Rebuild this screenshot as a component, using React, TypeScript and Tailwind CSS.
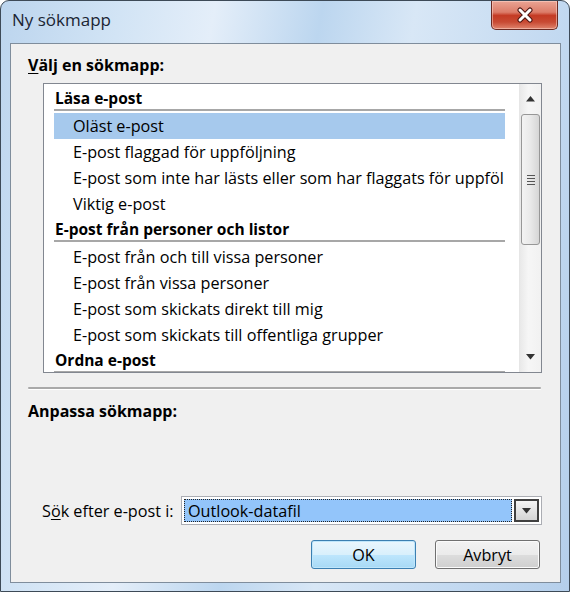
const groups = [
  {
    title: "Läsa e-post",
    items: [
      "Oläst e-post",
      "E-post flaggad för uppföljning",
      "E-post som inte har lästs eller som har flaggats för uppföl",
      "Viktig e-post",
    ],
  },
  {
    title: "E-post från personer och listor",
    items: [
      "E-post från och till vissa personer",
      "E-post från vissa personer",
      "E-post som skickats direkt till mig",
      "E-post som skickats till offentliga grupper",
    ],
  },
  {
    title: "Ordna e-post",
    items: [],
  },
];

const selected = "Oläst e-post";

const CloseGlyph = () => (
  <svg width="20" height="16" viewBox="0 0 20 16">
    <path d="M5 3 L15 13 M15 3 L5 13" stroke="#4a1410" strokeWidth="5" strokeLinecap="round" />
    <path d="M5 3 L15 13 M15 3 L5 13" stroke="#ffffff" strokeWidth="3" strokeLinecap="round" />
  </svg>
);

const Arrow = ({ down }: { down?: boolean }) => (
  <svg width="9" height="6" viewBox="0 0 9 6">
    {down ? <path d="M0 0 H9 L4.5 5.5 Z" fill="#333" /> : <path d="M0 5.5 H9 L4.5 0 Z" fill="#333" />}
  </svg>
);

export default function App() {
  return (
    <div className="w-[570px] h-[592px] flex flex-col overflow-hidden rounded-t-[9px] border border-[#3d4a57] bg-[linear-gradient(100deg,#bcd5ee_0%,#d2e4f5_18%,#e4eef9_32%,#bcd6ef_48%,#d8e7f6_62%,#c4daf1_82%,#b5cfeb_100%)] font-['Open_Sans','Noto_Sans',sans-serif] text-black">
      {/* title bar */}
      <div className="h-[42px] flex items-start justify-between pl-[11px]">
        <span className="mt-[8px] text-[17px] leading-[22px] text-[#1b2533]">Ny sökmapp</span>
        <button className="mr-[11px] w-[67px] h-[29px] flex items-center justify-center rounded-b-[5px] border border-t-0 border-[#6b2a22] bg-[linear-gradient(180deg,#eaa494_0%,#dc7c69_40%,#c43a24_52%,#c84a33_75%,#e0846d_100%)] shadow-[inset_0_0_0_1px_rgba(255,220,210,0.5)]">
          <CloseGlyph />
        </button>
      </div>

      {/* client area */}
      <div className="flex-1 ml-[9px] mr-[8px] mb-[8px] flex flex-col border border-[#7f8d9c] bg-[#f0f0f0]">
        <div className="ml-[17px] mt-[11px] text-[16px] leading-[20px] font-bold">
          <span className="underline underline-offset-2">V</span>älj en sökmapp:
        </div>

        <div className="ml-[32px] mt-[8px] w-[499px] h-[290px] flex border border-[#828790] bg-white">
          <div className="flex-1 min-w-0 overflow-hidden pt-[2px] pl-[10px] pr-[14px]">
            {groups.map((g) => (
              <div key={g.title}>
                <div className="h-[27px] flex flex-col">
                  <span className="pt-[1px] pl-[1px] text-[15.5px] leading-[22px] font-bold whitespace-nowrap">{g.title}</span>
                  <div className="h-[2px] bg-[#a7a7a7]" />
                </div>
                {g.items.map((it) => (
                  <div
                    key={it}
                    className={`h-[26px] pl-[19px] text-[16.2px] leading-[26px] whitespace-nowrap ${
                      it === selected ? "bg-[#a6c9ed]" : ""
                    }`}
                  >
                    {it}
                  </div>
                ))}
              </div>
            ))}
          </div>

          {/* scrollbar */}
          <div className="w-[22px] flex flex-col border-l border-[#e6e6e6] bg-[linear-gradient(90deg,#e9e9e9,#f6f6f6_40%,#f1f1f1)]">
            <div className="h-[30px] flex items-center justify-center">
              <Arrow />
            </div>
            <div className="h-[131px] mx-[1px] flex items-center justify-center rounded-[3px] border border-[#979797] bg-[linear-gradient(90deg,#f3f3f3,#e9e9e9_50%,#d6d6d6)]">
              <div className="flex flex-col gap-[2px]">
                <div className="w-[8px] h-[1px] bg-[#555]" />
                <div className="w-[8px] h-[1px] bg-[#555]" />
                <div className="w-[8px] h-[1px] bg-[#555]" />
                <div className="w-[8px] h-[1px] bg-[#555]" />
              </div>
            </div>
            <div className="flex-1" />
            <div className="h-[30px] flex items-center justify-center">
              <Arrow down />
            </div>
          </div>
        </div>

        <div className="ml-[17px] mt-[14px] w-[513px] h-[2px] rounded-full bg-[#a9a9a9] shadow-[0_1px_0_#ffffff]" />

        <div className="ml-[17px] mt-[12px] text-[16px] leading-[20px] font-bold">Anpassa sökmapp:</div>

        <div className="mt-[75px] ml-[31px] flex items-center gap-[5px]">
          <span className="w-[134px] whitespace-nowrap text-[16.2px] leading-[20px]">
            S<span className="underline underline-offset-2">ö</span>k efter e-post i:
          </span>
          <div className="w-[361px] h-[29px] flex items-center p-[2px] border border-[#abadb3] bg-white">
            <div className="flex-1 h-full flex items-center pl-[3px] border border-dotted border-[#222] bg-[#93c5fa] text-[16.2px] leading-[20px]">
              Outlook-datafil
            </div>
            <div className="ml-[2px] w-[25px] h-full flex items-center justify-center border-2 border-[#404040] bg-[linear-gradient(180deg,#f5f5f5,#e4e4e4_50%,#d4d4d4)]">
              <Arrow down />
            </div>
          </div>
        </div>

        <div className="mt-[15px] pr-[20px] flex justify-end gap-[19px]">
          <button className="w-[105px] h-[29px] rounded-[3px] border border-[#3c7fb1] bg-[linear-gradient(180deg,#eaf6fd_0%,#d9f0fc_50%,#bee6fd_51%,#a7d9f5_100%)] shadow-[inset_0_0_0_1px_#bfe6fb] text-[16.2px] leading-[20px]">
            OK
          </button>
          <button className="w-[105px] h-[29px] rounded-[3px] border border-[#707070] bg-[linear-gradient(180deg,#f2f2f2_0%,#ebebeb_50%,#dddddd_51%,#cfcfcf_100%)] shadow-[inset_0_0_0_1px_#fbfbfb] text-[16.2px] leading-[20px]">
            Avbryt
          </button>
        </div>
      </div>
    </div>
  );
}
